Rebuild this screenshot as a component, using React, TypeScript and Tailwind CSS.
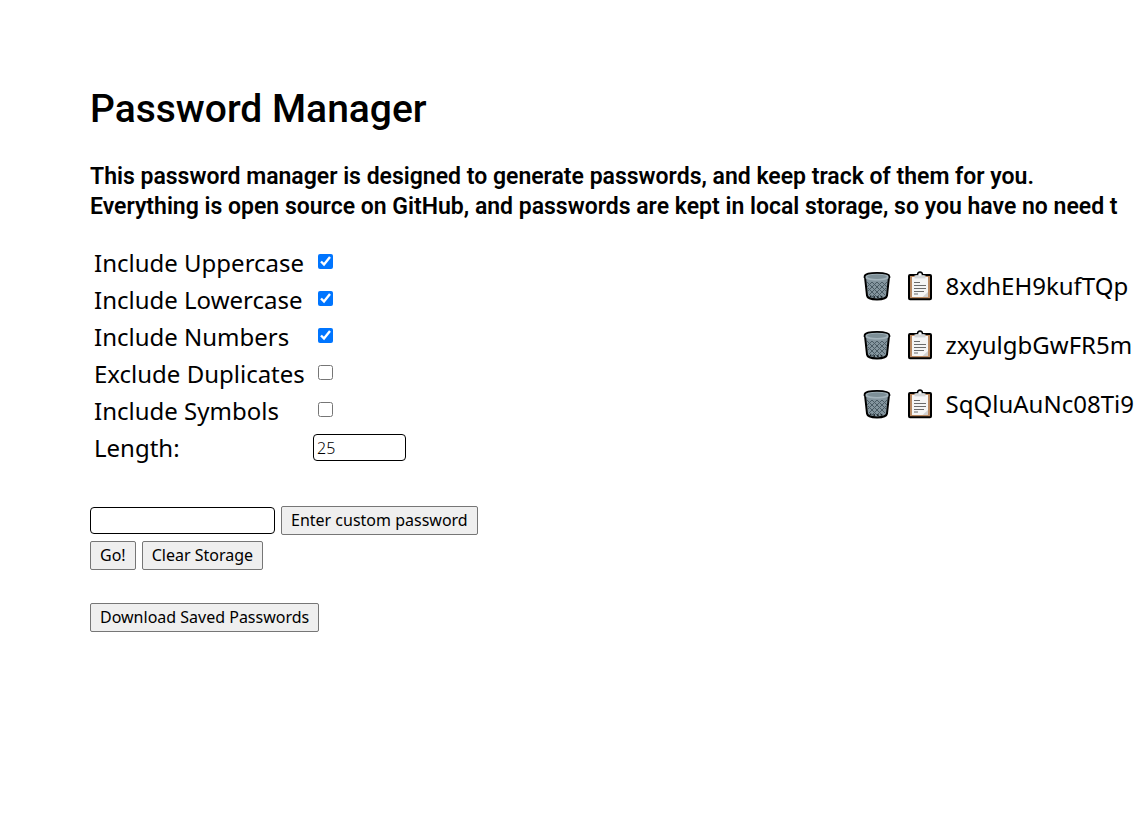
import { useState } from "react";

const options = [
  { id: "uppercase", label: "Include Uppercase", checked: true },
  { id: "lowercase", label: "Include Lowercase", checked: true },
  { id: "numbers", label: "Include Numbers", checked: true },
  { id: "duplicates", label: "Exclude Duplicates", checked: false },
  { id: "symbols", label: "Include Symbols", checked: false },
];

const passwords = ["8xdhEH9kufTQp", "zxyulgbGwFR5m", "SqQluAuNc08Ti9"];

const buttonClass =
  "rounded-xs border border-[#767676] bg-[#efefef] px-[9px] text-base leading-[27px] whitespace-nowrap";
const fieldClass =
  "h-[27px] rounded-[4px] border border-black bg-white px-[3px] text-base";

function TrashIcon() {
  return (
    <svg viewBox="0 0 28 30" className="h-[30px] w-7" aria-hidden="true">
      <path
        d="M2 6 4 24.5C4.4 27.3 8.4 28.4 14 28.4s9.6-1.1 10-3.9L26 6Z"
        fill="#84959e"
        stroke="#000"
        strokeWidth="2"
        strokeLinejoin="round"
      />
      <path
        d="m4 11 15 15M9 11l13 13M14 11l9 9M19 11l5 5M5 17l9 9M24 11 9 26M19 11 6 24M14 11l-9 9M9 11l-5 5M23 17l-9 9"
        stroke="#4a5b64"
        strokeWidth="1"
        fill="none"
      />
      <path d="M7 25c3 1.6 11 1.6 14 0" stroke="#1c262c" strokeWidth="1.8" fill="none" strokeDasharray="1.6 2" />
      <path d="M1.6 5.5C1.6 3 7 1.8 14 1.8S26.4 3 26.4 5.5 21 9.6 14 9.6 1.6 8 1.6 5.5Z" fill="#a3b3bb" />
      <path d="M1.6 7V5.5C1.6 3 7 1.8 14 1.8S26.4 3 26.4 5.5V7" fill="none" stroke="#000" strokeWidth="1.8" />
      <ellipse cx="14" cy="5.8" rx="10" ry="2.2" fill="#7d8f97" />
    </svg>
  );
}

function ClipboardIcon() {
  return (
    <svg viewBox="0 0 24 30" className="h-[30px] w-6" aria-hidden="true">
      <rect x="1" y="4" width="22" height="24.2" rx="1" fill="#b98a63" stroke="#000" strokeWidth="2" />
      <path d="M4 6h16v20H4Z" fill="#f5f5f5" />
      <path d="M20 21v5h-5.5Z" fill="#d2d2d2" />
      <path d="M7 5V3.6h2.4c.6-3.4 4.6-3.4 5.2 0H17V5" fill="#c9ccce" stroke="#000" strokeWidth="1.4" />
      <path d="M6.5 4.4h11v3h-11Z" fill="#d3d5d6" />
      <circle cx="12" cy="3.7" r="1" fill="#fff" />
      <path d="M6 11.5h6M6 14.5h12M6 17.5h12M6 20.5h10M6 23h4" stroke="#6b6b6b" strokeWidth="1.2" />
    </svg>
  );
}

export default function App() {
  const [checked, setChecked] = useState(() => options.map((o) => o.checked));
  const [length, setLength] = useState("25");
  const [custom, setCustom] = useState("");

  return (
    <main className="min-h-screen overflow-hidden bg-white pt-20 pl-[90px] font-['Noto_Sans',sans-serif] text-black">
      <h1 className="font-['Roboto',sans-serif] text-[39px] leading-[58px] font-medium">Password Manager</h1>
      <h2 className="mt-6 font-['Roboto',sans-serif] text-[23px] leading-[30px] font-semibold whitespace-nowrap">
        This password manager is designed to generate passwords, and keep track of them for you.
        <br />
        Everything is open source on GitHub, and passwords are kept in local storage, so you have no need t
      </h2>
      <div className="mt-[22px] grid grid-cols-[74%_1fr]">
        <section className="flex flex-col">
          <div className="grid w-fit grid-cols-[219px_auto] items-center pl-1">
            {options.map((option, i) => (
              <div key={option.id} className="col-span-2 grid h-[37px] grid-cols-subgrid items-center">
                <label htmlFor={option.id} className="text-2xl whitespace-nowrap">
                  {option.label}
                </label>
                <input
                  id={option.id}
                  type="checkbox"
                  className="mb-0.5 ml-[5px] size-[15px] accent-[#0075ff]"
                  checked={checked[i]}
                  onChange={() => setChecked(checked.map((v, j) => (j === i ? !v : v)))}
                />
              </div>
            ))}
            <label htmlFor="length" className="text-2xl leading-[37px]">
              Length:
            </label>
            <input
              id="length"
              type="text"
              inputMode="numeric"
              className={`${fieldClass} w-[93px] font-light`}
              value={length}
              onChange={(e) => setLength(e.target.value)}
            />
          </div>
          <div className="mt-10 flex items-center gap-1.5">
            <input
              type="text"
              aria-label="Custom password"
              className={`${fieldClass} w-[185px]`}
              value={custom}
              onChange={(e) => setCustom(e.target.value)}
            />
            <button type="button" className={buttonClass}>Enter custom password</button>
          </div>
          <div className="mt-1.5 flex gap-1.5">
            <button type="button" className={buttonClass}>Go!</button>
            <button type="button" className={buttonClass}>Clear Storage</button>
          </div>
          <div className="mt-[33px] flex">
            <button type="button" className={buttonClass}>Download Saved Passwords</button>
          </div>
        </section>
        <ul className="min-w-0 pt-3">
          {passwords.map((password) => (
            <li key={password} className="flex h-[59px] items-center">
              <button type="button" aria-label="Delete password" className="shrink-0">
                <TrashIcon />
              </button>
              <button type="button" aria-label="Copy password" className="ml-[17px] shrink-0">
                <ClipboardIcon />
              </button>
              <span className="ml-3.5 text-2xl whitespace-nowrap">{password}</span>
            </li>
          ))}
        </ul>
      </div>
    </main>
  );
}
